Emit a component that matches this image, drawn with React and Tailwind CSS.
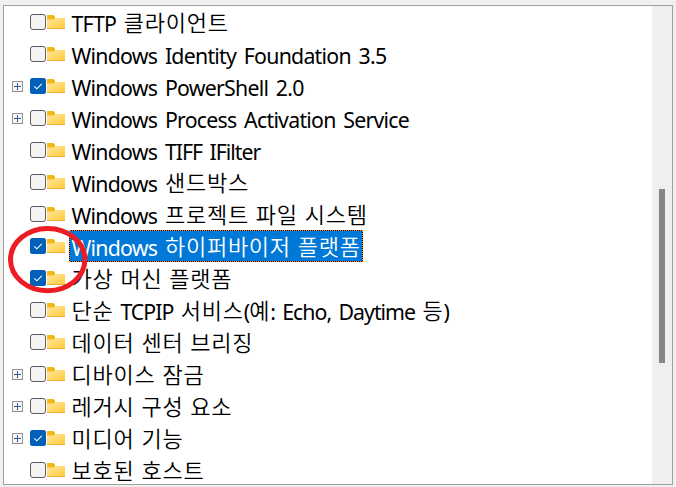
const rows = [
  { label: [['TFTP ', 'l'], ['클라이언트', 'k']] },
  { label: [['Windows Identity Foundation 3.5', 'l']] },
  { label: [['Windows PowerShell 2.0', 'l']], expandable: true, checked: true },
  { label: [['Windows Process Activation Service', 'l']], expandable: true },
  { label: [['Windows ', 'l'], ['TIFF IFilter', 't']] },
  { label: [['Windows ', 'l'], ['샌드박스', 'k']] },
  { label: [['Windows ', 'l'], ['프로젝트 파일 시스템', 'k']] },
  { label: [['Windows ', 'l'], ['하이퍼바이저 플랫폼', 'k']], checked: true, selected: true },
  { label: [['가상 머신 플랫폼', 'k']], checked: true },
  { label: [['단순 ', 'k'], ['TCPIP ', 't'], ['서비스', 'k'], ['(', 't'], ['예', 'k'], [': Echo, Daytime ', 't'], ['등', 'k'], [')', 't']] },
  { label: [['데이터 센터 브리징', 'k']] },
  { label: [['디바이스 잠금', 'k']], expandable: true },
  { label: [['레거시 구성 요소', 'k']], expandable: true },
  { label: [['미디어 기능', 'k']], expandable: true, checked: true },
  { label: [['보호된 호스트', 'k']] },
];

const scripts = {
  k: "relative -top-px font-['Noto_Sans_CJK_KR',sans-serif] font-[350] leading-none tracking-[0.75px] [word-spacing:1.3px]",
  l: "font-['Noto_Sans','Noto_Sans_CJK_KR',sans-serif] text-[21.3px] leading-none tracking-[-0.75px] [word-spacing:2.9px]",
  t: "font-['Noto_Sans','Noto_Sans_CJK_KR',sans-serif] text-[21.3px] leading-none tracking-[-1px] [word-spacing:2.9px]",
};

function Expander() {
  return (
    <svg className="block" width="11" height="11" viewBox="0 0 11 11">
      <rect x="0.5" y="0.5" width="10" height="10" fill="#f7f7f7" stroke="#919191" />
      <path d="M2 5.5h7M5.5 2v7" stroke="#3c5aa0" />
    </svg>
  );
}

function Checkbox({ checked }) {
  return (
    <svg className="block shrink-0" width="16" height="16" viewBox="0 0 16 16">
      {checked ? (
        <>
          <rect width="16" height="16" rx="2.5" fill="#005fb8" />
          <path d="M4.3 8.4l2.5 2.4 5-5" fill="none" stroke="#fff" strokeWidth="1.1" />
        </>
      ) : (
        <rect x="0.5" y="0.5" width="15" height="15" rx="2.5" fill="#f3f3f3" stroke="#5c5c5c" />
      )}
    </svg>
  );
}

function Folder() {
  return (
    <svg className="ml-px block shrink-0" width="18" height="15" viewBox="0 0 18 15">
      <defs>
        <linearGradient id="folder" x1="0" y1="0" x2="1" y2="1">
          <stop offset="0" stopColor="#ffe7a2" />
          <stop offset="1" stopColor="#ffc937" />
        </linearGradient>
      </defs>
      <path d="M0 1h6.5L8 2.5V4h10v2H0z" fill="#f9b61b" />
      <path d="M0 5.5h6.5L8 4h10V15H0z" fill="url(#folder)" />
      <path d="M0 14.5h18" stroke="#efb031" />
    </svg>
  );
}

function Label({ parts, selected }) {
  return (
    <span
      className={
        'ml-1 flex h-8 items-start whitespace-pre border border-dotted text-[22px] leading-[28px] ' +
        (selected ? 'border-[#ff8728] bg-black text-white' : 'border-transparent text-black')
      }
    >
      <span
        className={
          "h-[30px] pl-[1.5px] pr-px pt-px font-['Noto_Sans_CJK_KR',sans-serif] " + (selected ? 'bg-[#0078d7]' : '')
        }
      >
        {parts.map(([text, kind], i) => (
          <span key={i} className={scripts[kind]}>
            {text}
          </span>
        ))}
      </span>
    </span>
  );
}

export default function App() {
  return (
    <div className="relative h-[487px] w-[676px] overflow-hidden bg-[#f0f0f0] pl-[3px] pt-[5px]">
      <div className="flex h-[480px] w-[670px] border border-[#9f9f9f] bg-white">
        <div className="h-full flex-1 overflow-hidden">
          {rows.map((row, i) => (
            <div key={i} className="flex h-8 items-start pl-2">
              <div className="w-[18px] shrink-0 pt-[11px]">{row.expandable && <Expander />}</div>
              <div className="flex pt-2">
                <Checkbox checked={row.checked} />
                <Folder />
              </div>
              <Label parts={row.label} selected={row.selected} />
            </div>
          ))}
        </div>
        <div className="flex w-5 justify-center bg-[#efefef] pr-1 pt-[183px] pl-[3px]">
          <div className="h-[174px] w-1.5 shrink-0 bg-[#858585]" />
        </div>
      </div>
      <svg className="pointer-events-none absolute left-0 top-[220px]" width="96" height="80" viewBox="0 220 96 80">
        <ellipse cx="47.7" cy="259.6" rx="37.2" ry="31.2" fill="none" stroke="#ed1c24" strokeWidth="5" />
      </svg>
    </div>
  );
}
